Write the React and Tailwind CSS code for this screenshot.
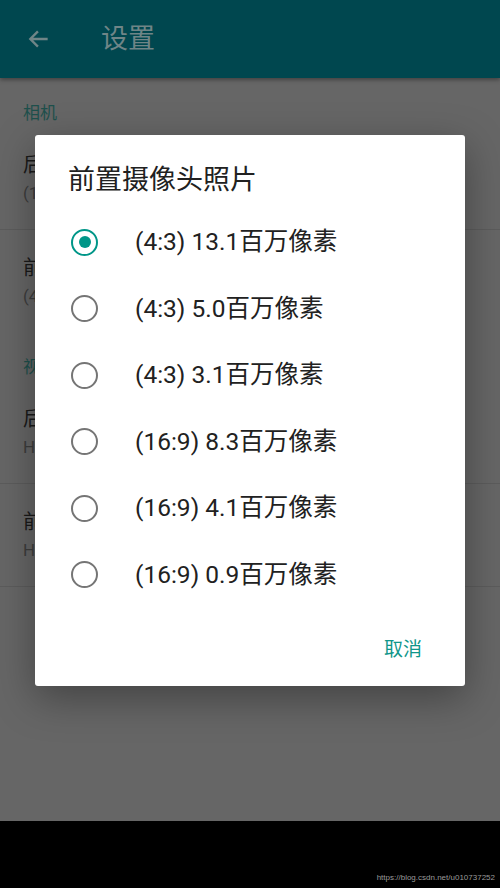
import { useState } from 'react';

const FONT = { fontFamily: 'Roboto, "Noto Sans CJK SC", sans-serif' };

const OPTIONS = [
  '(4:3) 13.1百万像素',
  '(4:3) 5.0百万像素',
  '(4:3) 3.1百万像素',
  '(16:9) 8.3百万像素',
  '(16:9) 4.1百万像素',
  '(16:9) 0.9百万像素',
];

function Radio({ checked }) {
  return (
    <span
      className={`flex h-[27px] w-[27px] shrink-0 items-center justify-center rounded-full border-[2.5px] ${
        checked ? 'border-[#009688]' : 'border-[#757575]'
      }`}
    >
      {checked && <span className="h-[12px] w-[12px] rounded-full bg-[#009688]" />}
    </span>
  );
}

function SectionHeader({ children }) {
  return <p className="pl-[23px] pt-[21px] text-[17px] leading-[28px] text-[#1e504c]">{children}</p>;
}

function PrefItem({ title, summary, divider }) {
  return (
    <div className={`pl-[23px] pt-[24px] pb-[22px] ${divider ? 'border-b border-[#5c5c5c]' : ''}`}>
      <p className="text-[20px] leading-[28px] text-[#1a1a1a]">{title}</p>
      <p className="text-[17px] leading-[28px] text-[#3d3d3d]">{summary}</p>
    </div>
  );
}

export default function App() {
  const [selected, setSelected] = useState(0);

  return (
    <div className="relative flex h-[888px] w-[500px] flex-col overflow-hidden bg-[#666666]" style={FONT}>
      {/* ── Toolbar (dimmed) ─────────────────────────────────────── */}
      <div className="flex h-[78px] shrink-0 items-center bg-[#00474f] shadow-[0_2px_4px_rgba(0,0,0,0.35)]">
        <svg className="ml-[26px]" width="26" height="26" viewBox="0 0 24 24" fill="none" stroke="#6f8587" strokeWidth="2.2">
          <path d="M20 12H4M11 5l-7 7 7 7" />
        </svg>
        <span className="ml-[49px] text-[27px] text-[#6f8587]">设置</span>
      </div>

      {/* ── Settings list behind the dialog ──────────────────────── */}
      <div className="flex-1">
        <SectionHeader>相机</SectionHeader>
        <PrefItem title="后置摄像头照片" summary="(16:9) 12.2百万像素" divider />
        <PrefItem title="前置摄像头照片" summary="(4:3) 13.1百万像素" />
        <SectionHeader>视频</SectionHeader>
        <PrefItem title="后置摄像头视频" summary="HD 1080p" divider />
        <PrefItem title="前置摄像头视频" summary="HD 720p" divider />
      </div>

      {/* ── Dialog ──────────────────────────────────────────────── */}
      <div className="absolute left-[35px] top-[135px] flex h-[551px] w-[430px] flex-col rounded-[3px] bg-white shadow-[0_12px_40px_rgba(0,0,0,0.35)]">
        <h2 className="pl-[33px] pt-[26px] text-[27px] leading-[38px] text-[#212121]">前置摄像头照片</h2>

        <div className="mt-[10px] flex flex-col">
          {OPTIONS.map((label, i) => (
            <button
              key={label}
              onClick={() => setSelected(i)}
              className="flex h-[66.5px] items-center pl-[36px] text-left"
            >
              <Radio checked={selected === i} />
              <span className="ml-[37px] text-[24.5px] leading-[32px] text-[#212121]">{label}</span>
            </button>
          ))}
        </div>

        <div className="mt-[28px] flex justify-end pr-[43px]">
          <button className="text-[19px] leading-[28px] text-[#0f968a]">取消</button>
        </div>
      </div>

      {/* ── Bottom navigation bar ───────────────────────────────── */}
      <div className="relative h-[67px] shrink-0 bg-black">
        <span
          className="absolute bottom-[4px] right-[5px] text-[8px] text-[#9a9a9a]"
          style={{ fontFamily: '"Liberation Sans", Arial, sans-serif' }}
        >
          https://blog.csdn.net/u010737252
        </span>
      </div>
    </div>
  );
}
